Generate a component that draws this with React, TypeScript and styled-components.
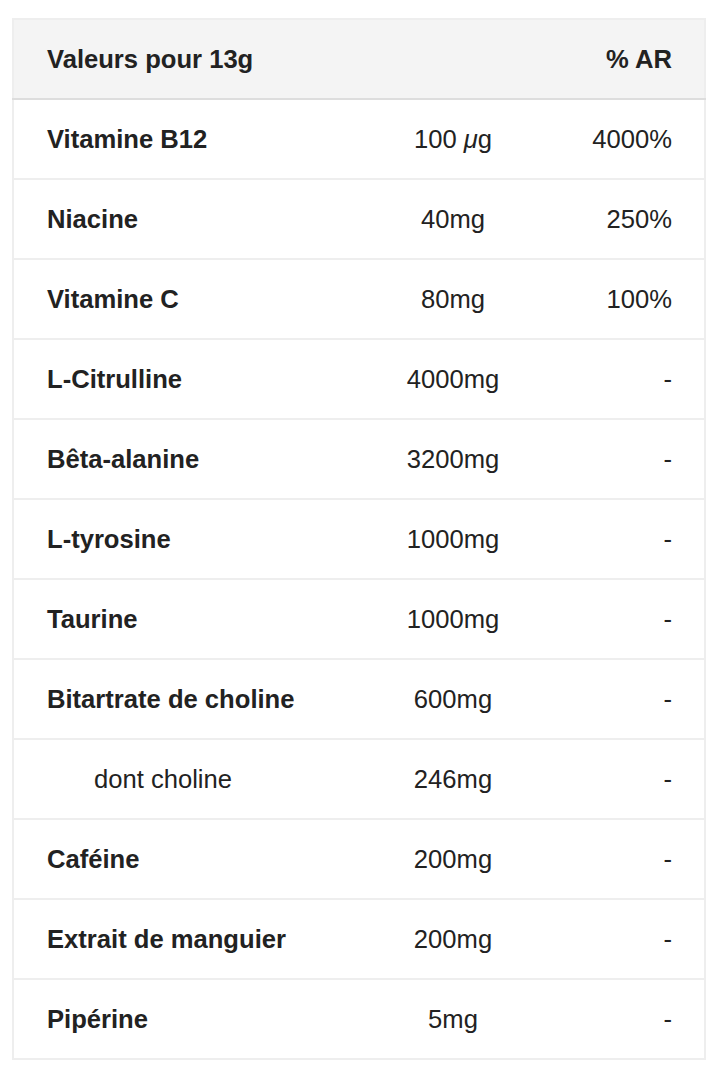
import React from "react";
import styled, { createGlobalStyle } from "styled-components";

const Global = createGlobalStyle`
  html, body { margin: 0; padding: 0; background: #fff; }
  body { font-family: "Liberation Sans", Arial, Helvetica, sans-serif; color: #222; }
`;

const Page = styled.div`
  padding: 18px 18px 0 12px;
`;

const Table = styled.table`
  width: 694px;
  border-collapse: collapse;
  border: 2px solid #eeeeee;
  table-layout: fixed;
  font-size: 25.6px;
`;

const HeadRow = styled.tr`
  background: #f4f4f4;
  border-bottom: 2px solid #dddddd;
`;

const Row = styled.tr`
  border-bottom: 2px solid #eeeeee;
`;

const Cell = styled.td<{ $align?: "left" | "center" | "right"; $bold?: boolean; $indent?: boolean }>`
  height: 80px;
  padding: 0 32px 0 ${(p) => (p.$indent ? 80 : 33)}px;
  text-align: ${(p) => p.$align ?? "left"};
  font-weight: ${(p) => (p.$bold ? 700 : 400)};
  vertical-align: middle;
  white-space: nowrap;
  box-sizing: border-box;
`;

const MidCell = styled(Cell)`
  padding: 0;
`;

const Micro = styled.i`
  font-style: italic;
`;

type Item = { name: string; amount: React.ReactNode; ar: string; sub?: boolean };

const items: Item[] = [
  { name: "Vitamine B12", amount: <>100 <Micro>μ</Micro>g</>, ar: "4000%" },
  { name: "Niacine", amount: "40mg", ar: "250%" },
  { name: "Vitamine C", amount: "80mg", ar: "100%" },
  { name: "L-Citrulline", amount: "4000mg", ar: "-" },
  { name: "Bêta-alanine", amount: "3200mg", ar: "-" },
  { name: "L-tyrosine", amount: "1000mg", ar: "-" },
  { name: "Taurine", amount: "1000mg", ar: "-" },
  { name: "Bitartrate de choline", amount: "600mg", ar: "-" },
  { name: "dont choline", amount: "246mg", ar: "-", sub: true },
  { name: "Caféine", amount: "200mg", ar: "-" },
  { name: "Extrait de manguier", amount: "200mg", ar: "-" },
  { name: "Pipérine", amount: "5mg", ar: "-" },
];

export default function App() {
  return (
    <Page>
      <Global />
      <Table>
        <colgroup>
          <col style={{ width: 345 }} />
          <col style={{ width: 190 }} />
          <col />
        </colgroup>
        <thead>
          <HeadRow>
            <Cell as="th" $bold>Valeurs pour 13g</Cell>
            <MidCell as="th" />
            <Cell as="th" $bold $align="right">% AR</Cell>
          </HeadRow>
        </thead>
        <tbody>
          {items.map((it) => (
            <Row key={it.name}>
              <Cell $bold={!it.sub} $indent={it.sub}>{it.name}</Cell>
              <MidCell $align="center">{it.amount}</MidCell>
              <Cell $align="right">{it.ar}</Cell>
            </Row>
          ))}
        </tbody>
      </Table>
    </Page>
  );
}
